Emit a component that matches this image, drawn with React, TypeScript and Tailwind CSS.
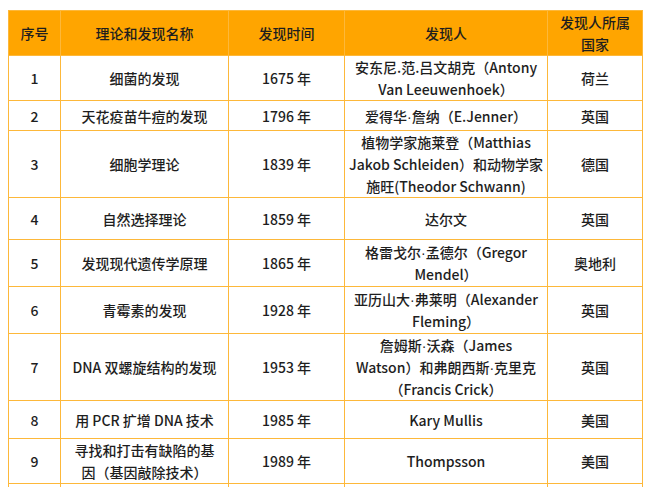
import React from "react";

type Row = {
    no: string;
    name: React.ReactNode;
    year: string;
    who: React.ReactNode;
    country: string;
    h: string;
};

// narrow latin middle dot, like the reference
const Dot = () => (
    <span className="font-['Liberation_Sans',sans-serif] leading-none">·</span>
);

const rows: Row[] = [
    {
        no: "1",
        name: "细菌的发现",
        year: "1675 年",
        who: (
            <>
                安东尼.范.吕文胡克（Antony
                <br />
                Van Leeuwenhoek）
            </>
        ),
        country: "荷兰",
        h: "h-[45px]",
    },
    {
        no: "2",
        name: "天花疫苗牛痘的发现",
        year: "1796 年",
        who: (
            <>
                爱得华<Dot />詹纳（E.Jenner）
            </>
        ),
        country: "英国",
        h: "h-[30px]",
    },
    {
        no: "3",
        name: "细胞学理论",
        year: "1839 年",
        who: (
            <>
                植物学家施莱登（Matthias
                <br />
                Jakob Schleiden）和动物学家
                <br />
                施旺(Theodor Schwann)
            </>
        ),
        country: "德国",
        h: "h-[67px]",
    },
    {
        no: "4",
        name: "自然选择理论",
        year: "1859 年",
        who: "达尔文",
        country: "英国",
        h: "h-[42px]",
    },
    {
        no: "5",
        name: "发现现代遗传学原理",
        year: "1865 年",
        who: (
            <>
                格雷戈尔<Dot />孟德尔（Gregor
                <br />
                Mendel）
            </>
        ),
        country: "奥地利",
        h: "h-[47px]",
    },
    {
        no: "6",
        name: "青霉素的发现",
        year: "1928 年",
        who: (
            <>
                亚历山大<Dot />弗莱明（Alexander
                <br />
                Fleming）
            </>
        ),
        country: "英国",
        h: "h-[47px]",
    },
    {
        no: "7",
        name: "DNA 双螺旋结构的发现",
        year: "1953 年",
        who: (
            <>
                詹姆斯<Dot />沃森（James
                <br />
                Watson）和弗朗西斯<Dot />克里克
                <br />
                （Francis Crick）
            </>
        ),
        country: "英国",
        h: "h-[67px]",
    },
    {
        no: "8",
        name: "用 PCR 扩增 DNA 技术",
        year: "1985 年",
        who: "Kary Mullis",
        country: "美国",
        h: "h-[38px]",
    },
    {
        no: "9",
        name: (
            <>
                寻找和打击有缺陷的基
                <br />
                因（基因敲除技术）
            </>
        ),
        year: "1989 年",
        who: "Thompsson",
        country: "美国",
        h: "h-[45px]",
    },
    {
        no: "",
        name: "",
        year: "",
        who: "",
        country: "",
        h: "h-[45px]",
    },
];

const cell = "border border-[#FDB83A] text-center align-middle p-0";

export default function App() {
    return (
        <div className="w-[650px] h-[487px] overflow-hidden bg-white pt-[10px] pl-[8px] font-['Noto_Sans_CJK_SC','Noto_Sans',sans-serif] text-[14px] leading-[22px] text-[#1e1e1e]">
            <table className="border-collapse table-fixed w-[634px]">
                <colgroup>
                    <col className="w-[52px]" />
                    <col className="w-[168px]" />
                    <col className="w-[116px]" />
                    <col className="w-[203px]" />
                    <col className="w-[95px]" />
                </colgroup>
                <thead>
                    {/* Header */}
                    <tr className="h-[45px] bg-[#FFA500]">
                        <th className={`${cell} font-medium`}>序号</th>
                        <th className={`${cell} font-medium`}>理论和发现名称</th>
                        <th className={`${cell} font-medium`}>发现时间</th>
                        <th className={`${cell} font-medium`}>发现人</th>
                        <th className={`${cell} font-medium`}>
                            发现人所属
                            <br />
                            国家
                        </th>
                    </tr>
                </thead>
                <tbody className="font-medium">
                    {rows.map((r, i) => (
                        <tr key={i} className={r.h}>
                            <td className={cell}>{r.no}</td>
                            <td className={cell}>{r.name}</td>
                            <td className={cell}>{r.year}</td>
                            <td className={cell}>{r.who}</td>
                            <td className={cell}>{r.country}</td>
                        </tr>
                    ))}
                </tbody>
            </table>
        </div>
    );
}
